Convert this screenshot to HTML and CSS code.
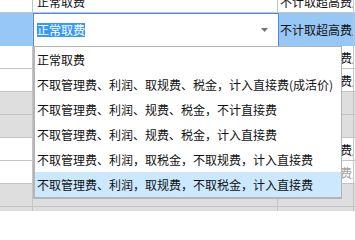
FILE: index.html
```html
<!DOCTYPE html>
<html lang="zh">
<head>
<meta charset="utf-8">
<link rel="stylesheet" href="styles.css">
</head>
<body>
<div class="grid">
  <div class="row">
    <div class="cell a"></div>
    <div class="cell b">正常取费</div>
    <div class="cell c">不计取超高费用</div>
    <div class="cell d"></div>
  </div>
  <div class="row active">
    <div class="cell a"></div>
    <div class="cell b editor">
      <span class="sel">正常取费</span>
      <svg class="arrow" width="7" height="4" viewBox="0 0 7 4"><path d="M0 0H7L3.5 4Z" fill="#707070"/></svg>
    </div>
    <div class="cell c">不计取超高费用</div>
    <div class="cell d"></div>
  </div>
  <div class="row">
    <div class="cell a"></div>
    <div class="cell b"></div>
    <div class="cell c">不计取超高费用</div>
    <div class="cell d"></div>
  </div>
  <div class="row">
    <div class="cell a"></div>
    <div class="cell b"></div>
    <div class="cell c">不计取超高费用</div>
    <div class="cell d"></div>
  </div>
  <div class="row alt">
    <div class="cell a"></div>
    <div class="cell b"></div>
    <div class="cell c"></div>
    <div class="cell d"></div>
  </div>
  <div class="row alt">
    <div class="cell a"></div>
    <div class="cell b"></div>
    <div class="cell c"></div>
    <div class="cell d"></div>
  </div>
  <div class="row">
    <div class="cell a"></div>
    <div class="cell b"></div>
    <div class="cell c">不计取超高费用</div>
    <div class="cell d"></div>
  </div>
  <div class="row">
    <div class="cell a"></div>
    <div class="cell b"></div>
    <div class="cell c muted">不计取超高费用</div>
    <div class="cell d"></div>
  </div>
  <div class="row alt">
    <div class="cell a"></div>
    <div class="cell b"></div>
    <div class="cell c"></div>
    <div class="cell d"></div>
  </div>
  <div class="row alt">
    <div class="cell a"></div>
    <div class="cell b"></div>
    <div class="cell c"></div>
    <div class="cell d"></div>
  </div>
</div>
<ul class="dropdown">
  <li class="item">正常取费</li>
  <li class="item">不取管理费、利润、取规费、税金，计入直接费(成活价)</li>
  <li class="item">不取管理费、利润、规费、税金，不计直接费</li>
  <li class="item">不取管理费、利润、规费、税金，计入直接费</li>
  <li class="item">不取管理费、利润，取税金，不取规费，计入直接费</li>
  <li class="item selected">不取管理费、利润，取规费，不取税金，计入直接费</li>
</ul>
</body>
</html>
```

FILE: styles.css
```css
html, body {
  margin: 0;
  padding: 0;
}
body {
  width: 355px;
  height: 211px;
  overflow: hidden;
  position: relative;
  background: #ffffff;
  font-family: "Noto Sans CJK SC", "Noto Sans", sans-serif;
  font-size: 12px;
  color: #111111;
}
.grid {
  margin-top: -10px;
  display: flex;
  flex-direction: column;
}
.row {
  display: flex;
  height: 23px;
  background: #ffffff;
}
.row.alt {
  background: #dedede;
}
.row.active {
  height: 33px;
  background: #97c8f5;
}
.cell {
  box-sizing: border-box;
  height: 100%;
  border-right: 1px solid #c4c4c4;
  border-bottom: 1px solid #c4c4c4;
  display: flex;
  align-items: center;
  white-space: nowrap;
  overflow: hidden;
}
.a { width: 33px; flex: none; }
.b { width: 245px; flex: none; padding-left: 4px; }
.c { width: 76px; flex: none; padding-left: 2px; }
.d { flex: 1; border-right: none; }
.row.active .cell { border-bottom: none; }
.muted { color: #a0a0a0; }
.editor {
  width: 246px;
  margin-right: -1px;
  background: #ffffff;
  border: 1px solid #3d8ee6;
  border-bottom: none;
  padding-left: 3px;
  padding-right: 10px;
  justify-content: space-between;
  position: relative;
  z-index: 1;
}
.sel {
  background: #3399ff;
  color: #ffffff;
  line-height: 14px;
}
.arrow {
  display: block;
}
.dropdown {
  position: absolute;
  left: 33px;
  top: 46px;
  width: 309px;
  box-sizing: border-box;
  margin: 0;
  padding: 0;
  list-style: none;
  background: #ffffff;
  border: 1px solid #b4b4b4;
  border-left-width: 2px;
  border-bottom-width: 2px;
  z-index: 2;
}
.item {
  height: 25px;
  line-height: 25px;
  padding-left: 2px;
  white-space: nowrap;
}
.item.selected {
  background: #cce8ff;
}
```
